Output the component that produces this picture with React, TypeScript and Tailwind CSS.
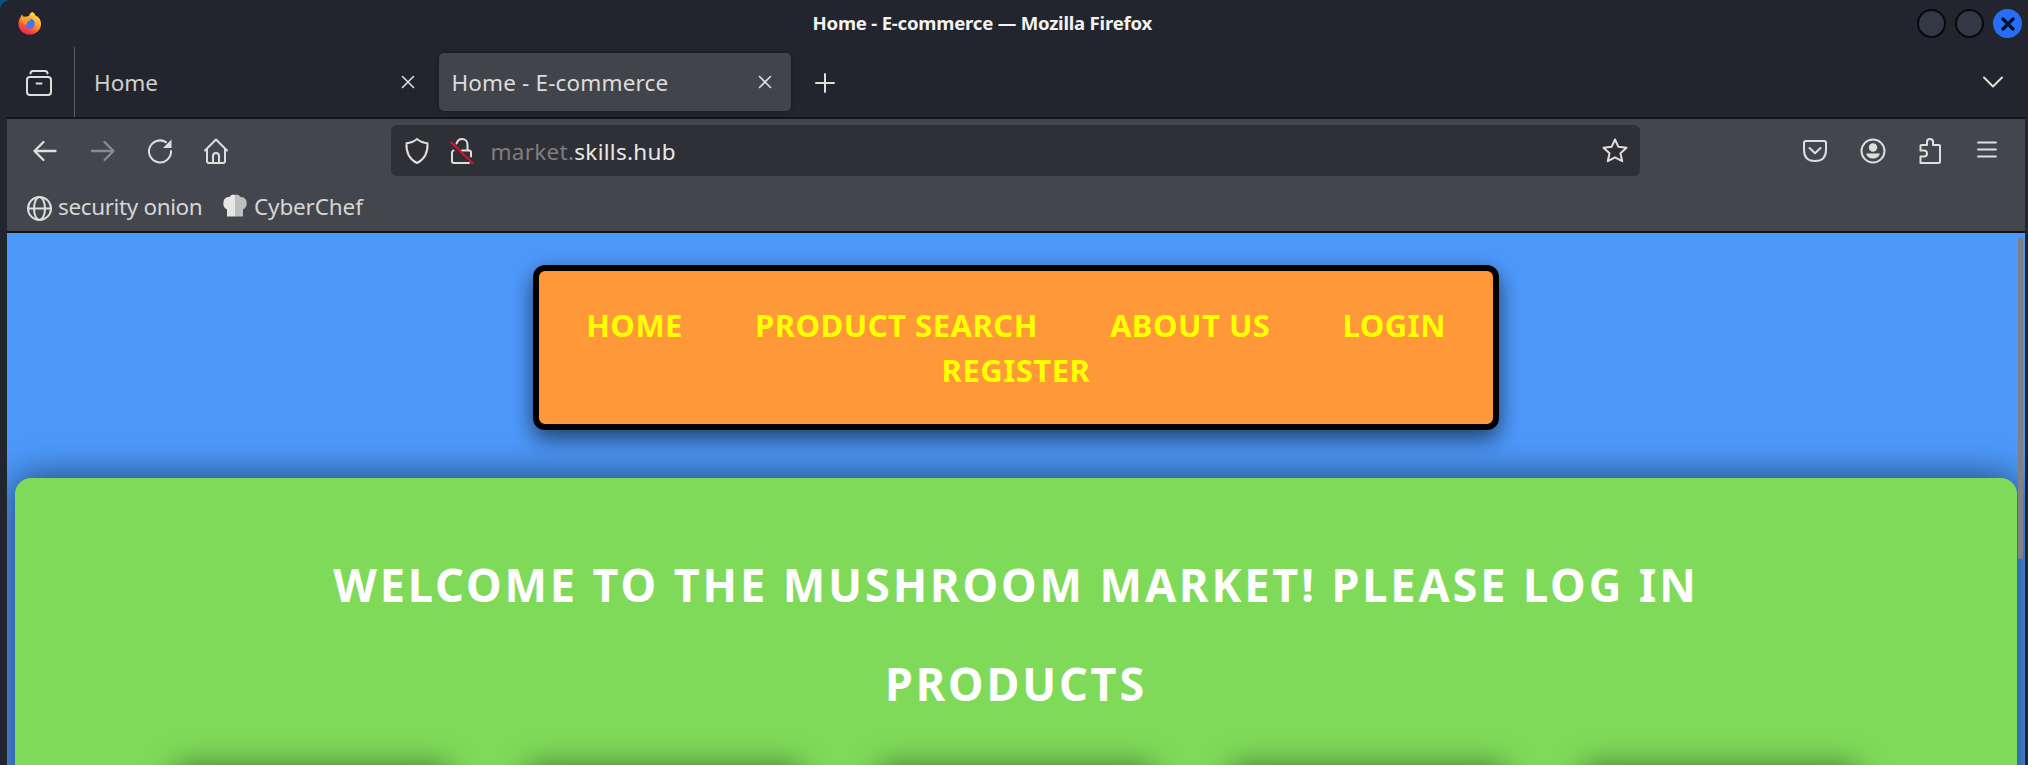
import type { ReactNode } from "react";

const INK = "#dededc";

type IconProps = { w: number; h: number; className?: string; children: ReactNode; stroke?: number };

function Icon({ w, h, className = "", children, stroke = 2 }: IconProps) {
  return (
    <svg
      width={w}
      height={h}
      viewBox={`0 0 ${w} ${h}`}
      className={`shrink-0 overflow-visible ${className}`}
      fill="none"
      stroke={INK}
      strokeWidth={stroke}
      strokeLinecap="round"
      strokeLinejoin="round"
    >
      {children}
    </svg>
  );
}

function FirefoxLogo() {
  return (
    <svg width="24" height="24" viewBox="0 0 24 24" className="ml-[18px] shrink-0">
      <defs>
        <linearGradient id="fx" x1="0.8" y1="0.1" x2="0.3" y2="1">
          <stop offset="0" stopColor="#ffe04a" />
          <stop offset="0.4" stopColor="#ffa02e" />
          <stop offset="0.75" stopColor="#ff4438" />
          <stop offset="1" stopColor="#f0245c" />
        </linearGradient>
      </defs>
      <path
        fill="url(#fx)"
        d="M14.4 1c2 1.300 2.900 2.600 3.400 4 2.500.6 5.200 3.500 5.200 7.900C23 19 17.900 23.500 11.800 23.500 5.400 23.500.5 19 .5 12.900.5 10 1.500 7.500 2.700 6L3.700 3.500l2 2.300L9 5.600c1.600-.2 2-.6 2.600-2C12 2.500 13 1.500 14.400 1Z"
      />
      <circle cx="11.800" cy="12.800" r="5" fill="#3f75ee" />
      <path fill="#ff9a2c" d="M3.800 7.500c2-1.500 4-1.400 6.200-.3l2.800 1.600c-.5 1.500-3.200 1.200-4 2.600-.3.900.4 1.700-.5 2.600-2.400-.5-4.500-3-4.500-6.500Z" />
    </svg>
  );
}

function CloseTab() {
  return (
    <Icon w={14} h={14} stroke={1.6}>
      <path d="M1.500 1.500l11 11M12.500 1.500l-11 11" />
    </Icon>
  );
}

function TitleBar() {
  return (
    <div className="flex h-[47px] items-start pt-[11px]">
      <FirefoxLogo />
      <div className="ml-[770.500px] w-[345px] text-[18.600px] leading-[24px] font-bold tracking-[-0.220px] whitespace-nowrap text-[#f2f2f0]">
        Home - E-commerce — Mozilla Firefox
      </div>
      <div className="-mt-[2px] mr-[6px] ml-auto flex gap-[9px]">
        <div className="size-[29px] rounded-full border-2 border-[#08090c] bg-[#343845]" />
        <div className="size-[29px] rounded-full border-2 border-[#08090c] bg-[#343845]" />
        <div className="grid size-[29px] place-items-center rounded-full bg-[#256ff5]">
          <svg width="14" height="14" viewBox="0 0 14 14" stroke="#07122c" strokeWidth="3.200" strokeLinecap="round">
            <path d="M2 2l10 10M12 2L2 12" />
          </svg>
        </div>
      </div>
    </div>
  );
}

function TabStrip() {
  return (
    <div className="flex h-[70px] items-center">
      <Icon w={26} h={26} className="mt-[2px] ml-[26px]">
        <rect x="1" y="7" width="24" height="18" rx="3" />
        <path d="M4.500 3.500Q4.500 1 7 1h12q2.500 0 2.500 2.500M10.500 13.500h5" />
      </Icon>
      <div className="ml-[22px] h-[70px] w-px bg-[#5a5c63]" />
      <div className="mt-[2px] ml-[19px] w-[307px] text-[22.500px] text-[#cfcfcd]">Home</div>
      <CloseTab />
      <div className="ml-[24px] flex h-[58px] w-[352px] items-center rounded-[5px] bg-[#42444c] shadow-[0_0_4px_rgba(0,0,0,0.4)]">
        <div className="mt-[2px] ml-[12.500px] w-[306.500px] text-[22.500px] tracking-[0.150px] text-[#dcdcda]">Home - E-commerce</div>
        <CloseTab />
      </div>
      <Icon w={20} h={20} className="mt-[2px] ml-[24px]">
        <path d="M10 1v18M1 10h18" />
      </Icon>
      <Icon w={20} h={12} className="mr-[25px] ml-auto">
        <path d="M1 1.500l9 9 9-9" />
      </Icon>
    </div>
  );
}

function UrlBar() {
  return (
    <div className="ml-[163px] flex h-[51px] w-[1249px] items-center rounded-[6px] bg-[#2f3035]">
      <Icon w={24} h={26} className="ml-[14px]">
        <path d="M12 1C9 3.500 5.500 5 1.500 5.200 1 14 4 21 12 25c8-4 11-11 10.500-19.800C18.500 5 15 3.500 12 1Z" />
      </Icon>
      <Icon w={24} h={26} className="ml-[21px]">
        <path d="M6.500 5.500C7.500 2.500 9.500 1 12 1c3.500 0 5.500 2.500 5.500 5.500V12M3.500 12.500Q2 13 2 15v8q0 2 2 2h15M12 12.500h7q2 0 2 2v4" />
        <path stroke="#d0143c" d="M1.500 4.500L22.500 25" />
      </Icon>
      <div className="ml-[16.500px] pt-[2px] text-[22.500px] tracking-[0.280px] text-[#7d7e82]">
        market.<span className="text-[#e8e8e6]">skills.hub</span>
      </div>
      <Icon w={26} h={26} className="mr-[12px] ml-auto">
        <path d="M13 1.500l3.300 7.200 8.200 1-6 5.500 1.700 8-7.200-3.800-7.200 3.800 1.700-8-6-5.500 8.200-1Z" />
      </Icon>
    </div>
  );
}

function NavBar() {
  return (
    <div className="flex h-[63px] items-center">
      <Icon w={24} h={22} className="ml-[26px]" stroke={2.3}>
        <path d="M22.500 11H1.500M10.500 2l-9 9 9 9" />
      </Icon>
      <Icon w={24} h={22} className="ml-[34px] opacity-45" stroke={2.3}>
        <path d="M1 11h21.500M13.500 2l9 9-9 9" />
      </Icon>
      <Icon w={24} h={24} className="ml-[33px]">
        <path d="M18 3.200A11 11 0 1 0 23 12" />
        <path fill={INK} stroke="none" d="M23.500.500v8.500h-8.500Z" />
      </Icon>
      <Icon w={24} h={26} className="ml-[32px]">
        <path d="M1 12.500L12 1.500l11 11M3 11v12q0 2 2 2h14q2 0 2-2V11M9 25v-7q0-3 3-3t3 3v7" />
      </Icon>
      <UrlBar />
      <Icon w={24} h={22} className="ml-[163px]">
        <path d="M3 1h18q2 0 2 2v7q0 11-11 11T1 10V3q0-2 2-2ZM6.500 8l5.500 5.200L17.500 8" />
      </Icon>
      <Icon w={26} h={26} className="ml-[33px]">
        <circle cx="13" cy="13" r="11.500" />
        <circle cx="13" cy="9.500" r="4.200" fill={INK} stroke="none" />
        <path fill={INK} stroke="none" d="M6 15.500h14q-1.500 5-7 5t-7-5Z" />
      </Icon>
      <Icon w={22} h={26} className="ml-[33px]">
        <path d="M1.500 25V18.500h3.500q3 0 3-3t-3-3h-3.500V8Q1.500 7 2.500 7H8V4q0-3 3-3t3 3v3h6q1 0 1 1v16q0 1-1 1Z" />
      </Icon>
      <Icon w={20} h={17} className="mb-[3px] ml-[36px]" stroke={1.9}>
        <path d="M1 1.500h18M1 8.500h18M1 15.500h18" />
      </Icon>
    </div>
  );
}

function Bookmarks() {
  return (
    <div className="flex h-[49px] items-center text-[22.500px] text-[#d6d6d4]">
      <Icon w={25} h={25} className="mt-[4px] ml-[20px]">
        <circle cx="12.500" cy="12.500" r="11.500" />
        <ellipse cx="12.500" cy="12.500" rx="5.500" ry="11.500" />
        <path d="M1 12.500h23" />
      </Icon>
      <div className="ml-[6px] w-[165px] tracking-[-0.370px] whitespace-nowrap">security onion</div>
      <svg width="24" height="24" viewBox="0 0 24 24" className="mb-[2px] shrink-0">
        <path fill="#e6e6e6" d="M4 22.500v-7C.500 13.500 0 11 .500 7.500 1 4 4 2.500 6.500 3 8 .500 10 .500 12 1v21.500Z" />
        <path fill="#bdbdbd" d="M20 22.500v-7c3.500-2 4-4.500 3.500-8-.500-3.500-3.500-5-6-4.500C16 .500 14 .500 12 1v21.500Z" />
      </svg>
      <div className="ml-[7px] tracking-[-0.150px]">CyberChef</div>
    </div>
  );
}

function SiteNav() {
  return (
    <nav className="mx-auto mt-[32px] h-[165px] w-[966px] shrink-0 rounded-[12px] border-[6px] border-black bg-[#ff9838] pt-[32px] text-[31px] leading-[44.700px] font-bold tracking-[0.500px] text-[#ffff00] shadow-[0_8px_22px_rgba(0,0,0,0.6)]">
      <div className="flex justify-center gap-[72px] whitespace-nowrap">
        <a>HOME</a>
        <a>PRODUCT SEARCH</a>
        <a>ABOUT US</a>
        <a>LOGIN</a>
      </div>
      <div className="text-center">
        <a>REGISTER</a>
      </div>
    </nav>
  );
}

const cards = [0, 1, 2, 3, 4];

function Page() {
  return (
    <main className="relative flex h-[532px] flex-col overflow-hidden bg-[#4d99fb]">
      <SiteNav />
      <section className="mt-[48px] mr-[8px] ml-[8px] h-[400px] shrink-0 rounded-t-[16px] bg-[#7fda59] pt-[72px] text-center text-[47px] leading-[68px] font-bold tracking-[3px] text-white shadow-[0_0_38px_rgba(0,0,0,0.6)]">
        <h1 className="scale-x-[0.959]">WELCOME TO THE MUSHROOM MARKET! PLEASE LOG IN</h1>
        <h2 className="mt-[31px] scale-x-[0.955]">PRODUCTS</h2>
        <div className="mt-[50px] flex justify-center gap-[78px]">
          {cards.map((c) => (
            <div key={c} className="h-[200px] w-[274px] rounded-[8px] bg-[#7fda59] shadow-[0_0_30px_rgba(0,0,0,0.5)]" />
          ))}
        </div>
      </section>
      <div className="absolute top-[4px] right-[2px] h-[322px] w-[5px] rounded-full bg-[#7f8285]" />
    </main>
  );
}

export default function App() {
  return (
    <div className="h-[765px] w-[2028px] overflow-hidden bg-[#0b4f86] font-['Noto_Sans',sans-serif]">
      <div className="h-full rounded-tl-[10px] bg-[#23252e]">
        <TitleBar />
        <TabStrip />
        <div className="mr-[3px] ml-[7px] border-t-2 border-[#14151b] bg-[#44464d]">
          <NavBar />
          <Bookmarks />
          <div className="h-[2px] bg-[#14151b]" />
          <Page />
        </div>
      </div>
    </div>
  );
}
